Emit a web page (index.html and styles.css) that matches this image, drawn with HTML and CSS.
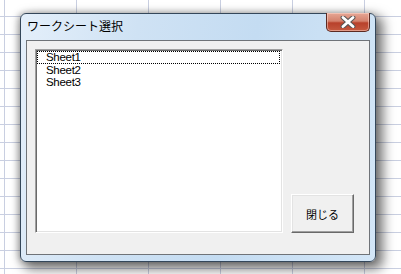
FILE: index.html
```html
<!DOCTYPE html>
<html lang="ja">

<head>
    <meta charset="UTF-8" />
    <title>ワークシート選択</title>
    <link rel="stylesheet" href="styles.css">
</head>

<body>

    <!-- Dialog window -->
    <div class="window">
        <div class="titlebar">
            <div class="title">ワークシート選択</div>
            <button class="close-btn" aria-label="閉じる">
                <svg width="18" height="12" viewBox="0 0 18 12">
                    <path d="M4 1.5 L14 10.5 M14 1.5 L4 10.5" stroke="#555555" stroke-width="4.8" stroke-linecap="round" fill="none" />
                    <path d="M4 1.5 L14 10.5 M14 1.5 L4 10.5" stroke="#ffffff" stroke-width="2.8" stroke-linecap="round" fill="none" />
                </svg>
            </button>
        </div>

        <div class="client">
            <div class="listbox">
                <div class="list-item focused">Sheet1</div>
                <div class="list-item">Sheet2</div>
                <div class="list-item">Sheet3</div>
            </div>
            <div class="side">
                <button class="cmd-btn">閉じる</button>
            </div>
        </div>
    </div>

</body>

</html>
```

FILE: styles.css
```css
* {
    margin: 0;
    padding: 0;
    box-sizing: border-box;
}

/* Spreadsheet behind the dialog */
body {
    width: 401px;
    height: 274px;
    overflow: hidden;
    background-color: #ffffff;
    background-image:
        linear-gradient(to right, #c9cfe1 1px, transparent 1px),
        linear-gradient(to bottom, #c9cfe1 1px, transparent 1px);
    background-size: 72px 18px;
    background-position: 4px 16px;
    padding: 13px 0 0 20px;
}

/* Window frame */
.window {
    width: 356px;
    height: 249px;
    border: 1px solid #34475a;
    border-radius: 6px;
    background: linear-gradient(100deg, #e4effa 0%, #cfe2f4 30%, #c4dcf2 60%, #d3e6f7 100%);
    box-shadow: 5px 5px 12px 2px rgba(0, 0, 0, 0.55), -2px 0 6px rgba(0, 0, 0, 0.25);
    padding: 0 5px 6px 5px;
    display: flex;
    flex-direction: column;
}

.titlebar {
    height: 26px;
    display: flex;
    justify-content: space-between;
    align-items: flex-start;
    padding-left: 1px;
}

.title {
    font-family: "Noto Sans CJK JP", sans-serif;
    font-size: 12px;
    line-height: 16px;
    color: #000000;
    padding-top: 4px;
}

.close-btn {
    width: 44px;
    height: 19px;
    margin-top: -1px;
    border: 1px solid #5c2a22;
    border-top: none;
    border-radius: 0 0 5px 5px;
    background: linear-gradient(to bottom, #e6a795 0%, #d4826d 45%, #b8412b 55%, #c55a40 100%);
    box-shadow: inset 0 0 0 1px rgba(255, 220, 210, 0.5);
    display: flex;
    align-items: center;
    justify-content: center;
}

/* Client area */
.client {
    flex: 1;
    border: 1px solid #6f7378;
    background-color: #f0f0f0;
    display: flex;
    align-items: flex-end;
    padding: 8px 0 21px 8px;
}

.listbox {
    width: 248px;
    height: 184px;
    background-color: #ffffff;
    border-top: 1px solid #a0a0a0;
    border-left: 1px solid #a0a0a0;
    border-right: 1px solid #ffffff;
    border-bottom: 1px solid #ffffff;
    box-shadow: inset 1px 1px 0 #696969, inset -1px -1px 0 #e3e3e3;
    padding: 1px 2px 0 1px;
    align-self: flex-start;
}

.list-item {
    height: 12px;
    line-height: 12px;
    padding-left: 9px;
    font-family: "Liberation Sans", Arial, sans-serif;
    font-size: 11.5px;
    letter-spacing: -0.3px;
    color: #000000;
}

.list-item.focused {
    height: 13px;
    outline: 1px dotted #000000;
    outline-offset: -1px;
    line-height: 13px;
}

.side {
    padding-left: 8px;
}

.cmd-btn {
    width: 63px;
    height: 39px;
    background-color: #f0f0f0;
    border-top: 1px solid #ffffff;
    border-left: 1px solid #ffffff;
    border-right: 1px solid #696969;
    border-bottom: 1px solid #696969;
    box-shadow: inset -1px -1px 0 #a0a0a0, inset 1px 1px 0 #e3e3e3;
    font-family: "Noto Sans CJK JP", sans-serif;
    font-size: 11px;
    color: #000000;
    padding-top: 1px;
}
```
